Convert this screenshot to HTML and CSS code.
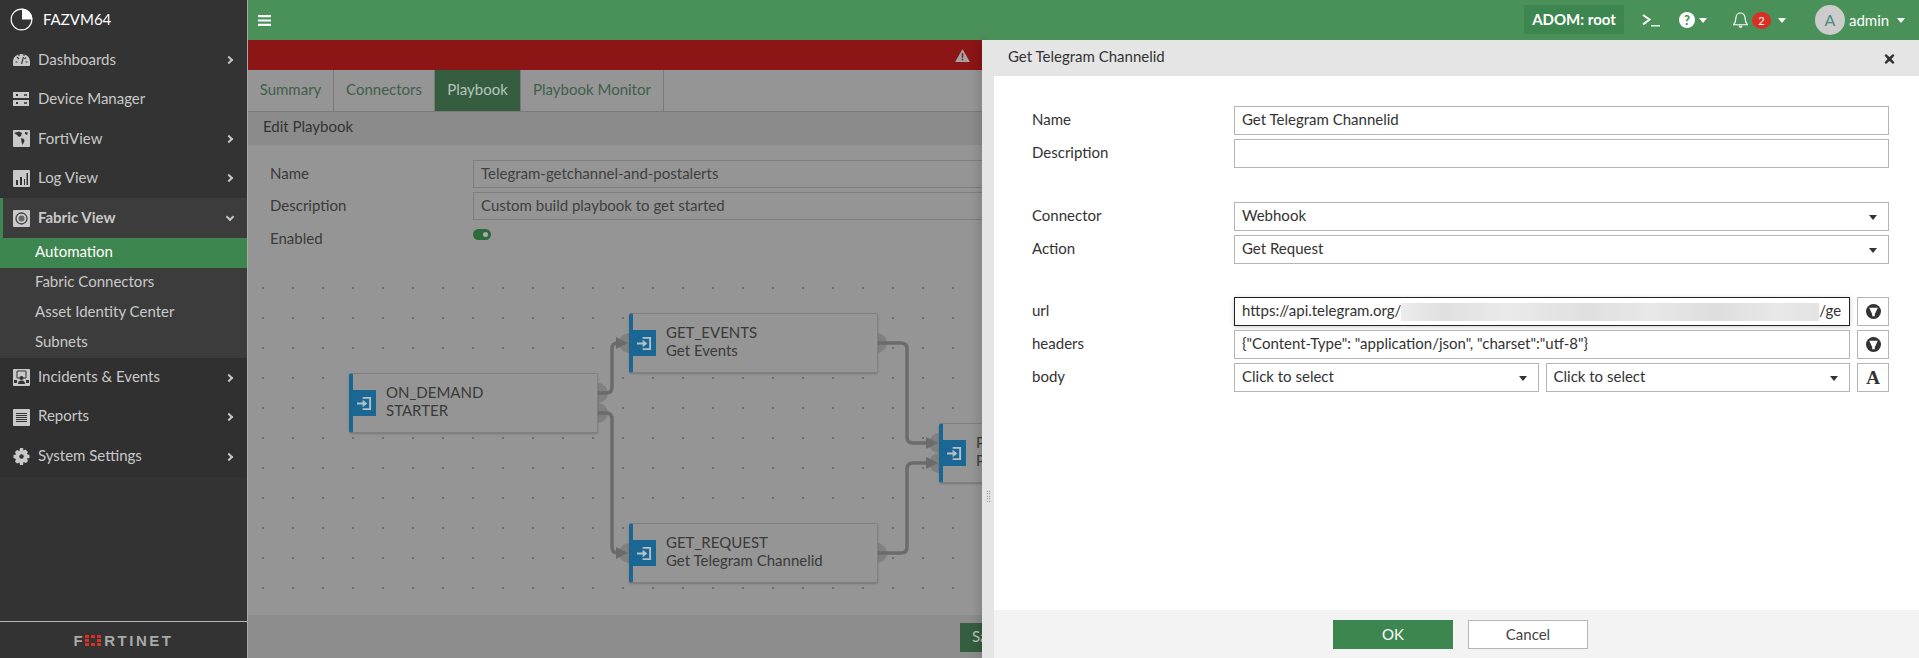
FILE: index.html
```html
<!DOCTYPE html>
<html lang="en">
<head>
<meta charset="utf-8">
<title>Get Telegram Channelid</title>
<link rel="stylesheet" href="styles.css">
</head>
<body>
<div class="app">
  <aside class="sidebar">
    <div class="brand">
      <svg class="pie" viewBox="0 0 24 24"><circle cx="12" cy="12" r="10.800" fill="none" stroke="#fff" stroke-width="1.200"/><path d="M12.500 0.500A11.500 11.500 0 0 1 23.500 12H12.500Z" fill="#fff"/></svg>
      <span>FAZVM64</span>
    </div>
    <nav class="nav">
      <a class="item">
        <svg class="ico" viewBox="0 0 17 17"><path d="M0 14V10A8.500 7 0 0 1 17 10V14A1 1 0 0 1 16 15H1A1 1 0 0 1 0 14Z" fill="#c9c9c9"/><path d="M8.500 13L10.500 6M4 6L6 8M13 6.500L11.500 8M2.500 11H4.500M12.500 11H14.500M6 5V3M11 5V3" stroke="#333" stroke-width="1.100"/></svg>
        <span class="lbl">Dashboards</span><span class="chev"></span>
      </a>
      <a class="item">
        <svg class="ico" viewBox="0 0 17 17"><path d="M0 1H16V7H0ZM0 9H16V15H0Z" fill="#c9c9c9"/><path d="M3 3H5V5H3ZM3 11H5V13H3Z" fill="#333"/><path d="M11 3H14V5H11ZM11 11H14V13H11Z" fill="#555"/></svg>
        <span class="lbl">Device Manager</span>
      </a>
      <a class="item">
        <svg class="ico" viewBox="0 0 17 17"><rect width="17" height="17" rx="1" fill="#c9c9c9"/><path d="M1 3L6 1.500L9 3L8 6L6 7L4 5ZM8 8L11 9L11.500 11L9.500 15L8.500 12ZM12 2L15 2.500L14 5L12 4Z" fill="#333"/></svg>
        <span class="lbl">FortiView</span><span class="chev"></span>
      </a>
      <a class="item">
        <svg class="ico" viewBox="0 0 17 17"><rect width="17" height="17" rx="1" fill="#c9c9c9"/><path d="M3 10H5V15H3ZM7 7H9V15H7ZM11 9H12V15H11ZM13.500 3H15V15H13.500Z" fill="#333"/></svg>
        <span class="lbl">Log View</span><span class="chev"></span>
      </a>
      <div class="group">
        <a class="item open">
          <svg class="ico" viewBox="0 0 17 17"><rect width="17" height="17" rx="1" fill="#c9c9c9"/><circle cx="8.500" cy="8.500" r="5.500" fill="none" stroke="#444" stroke-width="1.300"/><circle cx="8.500" cy="8.500" r="3" fill="#666"/></svg>
          <span class="lbl">Fabric View</span><span class="chev down"></span>
        </a>
        <a class="sub active">Automation</a>
        <a class="sub">Fabric Connectors</a>
        <a class="sub">Asset Identity Center</a>
        <a class="sub">Subnets</a>
      </div>
      <a class="item low">
        <svg class="ico" viewBox="0 0 17 17"><rect width="17" height="17" rx="1" fill="#c9c9c9"/><path d="M4 2H13V9H4Z" fill="none" stroke="#333"/><circle cx="8.500" cy="9" r="2" fill="#333"/><path d="M5 15A3.500 3.500 0 0 1 12 15ZM1 11H4V14H1ZM13 11H16V14H13Z" fill="#333"/></svg>
        <span class="lbl">Incidents &amp; Events</span><span class="chev"></span>
      </a>
      <a class="item low">
        <svg class="ico" viewBox="0 0 17 17"><rect width="17" height="17" rx="1" fill="#c9c9c9"/><path d="M3 4.500H14M3 6.500H14M3 8.500H14M3 10.500H14M3 12.500H14" stroke="#333"/></svg>
        <span class="lbl">Reports</span><span class="chev"></span>
      </a>
      <a class="item low">
        <svg class="ico" viewBox="0 0 17 17"><path d="M7 0H10L10.500 2.500L12.500 1.500L15 4L13.800 6L16.500 7V10L14 10.500L15 13L13 15L10.500 14L10 17H7L6.500 14.500L4 15.500L2 13.500L3 11L0.500 10V7L3 6.500L2 4L4 2L6.500 3Z" fill="#c9c9c9"/><circle cx="8.500" cy="8.500" r="2.200" fill="#333"/></svg>
        <span class="lbl">System Settings</span><span class="chev"></span>
      </a>
    </nav>
    <div class="logo">
      <span>F</span><svg class="logo-o" viewBox="0 0 16 11"><path d="M0 0H4V3H0ZM6 0H10V3H6ZM12 0H16V3H12ZM0 4H4V7H0ZM12 4H16V7H12ZM0 8H4V11H0ZM6 8H10V11H6ZM12 8H16V11H12Z" fill="#d93025"/></svg><span>RTINET</span>
    </div>
  </aside>

  <div class="content">
    <header class="topbar">
      <svg class="burger" viewBox="0 0 13 11"><path d="M0 0H13V2.200H0ZM0 4.400H13V6.600H0ZM0 8.800H13V11H0Z" fill="#fff"/></svg>
      <div class="top-right">
        <span class="adom">ADOM: root</span>
        <svg class="cli" viewBox="0 0 18 13"><path d="M1 1L7.500 5.500L1 10.500" fill="none" stroke="#fff" stroke-width="2"/><path d="M9 11.800H18" stroke="#fff" stroke-width="1.300"/></svg>
        <span class="help">?</span><span class="caret help-caret"></span>
        <svg class="bell" viewBox="0 0 16 18"><path d="M8 1.500A4.800 4.800 0 0 1 12.800 6.300C12.800 10.500 13.500 12 15.300 14H0.700C2.500 12 3.200 10.500 3.200 6.300A4.800 4.800 0 0 1 8 1.500Z" fill="none" stroke="#fff" stroke-width="1.200"/><path d="M6 15.200A2 2 0 0 0 10 15.200Z" fill="#fff"/></svg>
        <span class="badge">2</span><span class="caret bell-caret"></span>
        <span class="avatar">A</span>
        <span class="user">admin</span><span class="caret user-caret"></span>
      </div>
    </header>
    <div class="alert">
      <svg class="warn" viewBox="0 0 16 14"><path d="M8 0L16 14H0Z" fill="#a3a3a3"/><path d="M7.200 4.500H8.800V9.500H7.200ZM7.200 10.500H8.800V12H7.200Z" fill="#8c1515"/></svg>
    </div>
    <div class="tabs">
      <a class="tab t-summary">Summary</a>
      <a class="tab t-conn">Connectors</a>
      <a class="tab t-play on">Playbook</a>
      <a class="tab t-mon">Playbook Monitor</a>
    </div>
    <div class="page-title">Edit Playbook</div>
    <div class="pb-form">
      <div class="pb-row"><label>Name</label><div class="pb-input">Telegram-getchannel-and-postalerts</div></div>
      <div class="pb-row"><label>Description</label><div class="pb-input">Custom build playbook to get started</div></div>
      <div class="pb-row toggle-row"><label>Enabled</label><span class="toggle"></span></div>
    </div>
    <div class="canvas">
      <svg class="wires" width="735" height="329" viewBox="0 0 735 329">
        <g fill="#808080">
          <circle cx="350" cy="107" r="10"/><circle cx="350" cy="127" r="10"/>
          <circle cx="381" cy="57" r="10"/><circle cx="629" cy="57" r="10"/>
          <circle cx="381" cy="267" r="10"/><circle cx="629" cy="267" r="10"/>
          <circle cx="691" cy="157" r="10"/><circle cx="691" cy="177" r="10"/>
        </g>
        <g fill="none" stroke="#6b6b6b" stroke-width="3.500">
          <path d="M350 107H358Q364 107 364 101V63Q364 57 370 57H374"/>
          <path d="M350 127H358Q364 127 364 133V261Q364 267 370 267H374"/>
          <path d="M629 57H653Q659 57 659 63V151Q659 157 665 157H682"/>
          <path d="M629 267H653Q659 267 659 261V183Q659 177 665 177H682"/>
        </g>
        <g fill="#6b6b6b">
          <path d="M368 51L380 57L368 63Z"/><path d="M368 261L380 267L368 273Z"/>
          <path d="M678 151L690 157L678 163Z"/><path d="M678 171L690 177L678 183Z"/>
        </g>
      </svg>
      <div class="node n-start"><span class="node-ico"><svg viewBox="0 0 16 16"><path d="M6 1H15V15H6V13H13V3H6Z M0 7H6V4L11 8L6 12V9H0Z" fill="#b5bfc5"/></svg></span><div class="node-text">ON_DEMAND<br>STARTER</div></div>
      <div class="node n-events"><span class="node-ico"><svg viewBox="0 0 16 16"><path d="M6 1H15V15H6V13H13V3H6Z M0 7H6V4L11 8L6 12V9H0Z" fill="#b5bfc5"/></svg></span><div class="node-text">GET_EVENTS<br>Get Events</div></div>
      <div class="node n-request"><span class="node-ico"><svg viewBox="0 0 16 16"><path d="M6 1H15V15H6V13H13V3H6Z M0 7H6V4L11 8L6 12V9H0Z" fill="#b5bfc5"/></svg></span><div class="node-text">GET_REQUEST<br>Get Telegram Channelid</div></div>
      <div class="node n-post"><span class="node-ico"><svg viewBox="0 0 16 16"><path d="M6 1H15V15H6V13H13V3H6Z M0 7H6V4L11 8L6 12V9H0Z" fill="#b5bfc5"/></svg></span><div class="node-text">POST<br>Post</div></div>
    </div>
    <div class="save-bar"><button class="save">Save</button></div>
  </div>

  <section class="panel">
    <div class="grip"><i></i></div>
    <div class="panel-main">
      <div class="panel-head"><span>Get Telegram Channelid</span><svg class="close" viewBox="0 0 10 10"><path d="M1.500 0L5 3L8.500 0L10 1.500L7 5L10 8.500L8.500 10L5 7L1.500 10L0 8.500L3 5L0 1.500Z" fill="#333"/></svg></div>
      <div class="panel-body">
        <div class="f-row"><label>Name</label><div class="field">Get Telegram Channelid</div></div>
        <div class="f-row"><label>Description</label><div class="field"></div></div>
        <div class="f-row gap-top"><label>Connector</label><div class="field select">Webhook<span class="arrow"></span></div></div>
        <div class="f-row"><label>Action</label><div class="field select">Get Request<span class="arrow"></span></div></div>
        <div class="f-row gap-top2"><label>url</label>
          <div class="field focus">https://api.telegram.org/<span class="blur"></span>/ge</div>
          <button class="sq"><svg viewBox="0 0 14 14"><circle cx="7" cy="7" r="7" fill="#333"/><path d="M3 3.500H11L8.200 9.500V11.500H5.800V9.500Z" fill="#fff"/></svg></button>
        </div>
        <div class="f-row"><label>headers</label>
          <div class="field">{"Content-Type": "application/json", "charset":"utf-8"}</div>
          <button class="sq"><svg viewBox="0 0 14 14"><circle cx="7" cy="7" r="7" fill="#333"/><path d="M3 3.500H11L8.200 9.500V11.500H5.800V9.500Z" fill="#fff"/></svg></button>
        </div>
        <div class="f-row"><label>body</label>
          <div class="two">
            <div class="field select">Click to select<span class="arrow"></span></div>
            <div class="field select">Click to select<span class="arrow"></span></div>
          </div>
          <button class="sq serif">A</button>
        </div>
      </div>
      <div class="panel-foot"><button class="btn ok">OK</button><button class="btn cancel">Cancel</button></div>
    </div>
  </section>
</div>
</body>
</html>
```

FILE: styles.css
```css
* { box-sizing: border-box; }
html, body { margin: 0; height: 100%; overflow: hidden; }
body { font: 15px/17px Lato, "Open Sans", sans-serif; color: #333; }
.app { position: relative; display: flex; width: 1919px; height: 658px; overflow: hidden; }

/* sidebar */
.sidebar { flex: 0 0 248px; display: flex; flex-direction: column; background: #333; border-right: 1px solid #a9a9a9; color: #c9c9c9; }
.brand { display: flex; align-items: center; height: 40px; padding: 0 0 2px 10px; color: #fff; font-size: 15px; }
.pie { width: 23px; height: 23px; margin-right: 10px; }
.nav { flex: 1; background: #333; }
.item { display: flex; align-items: center; height: 39.500px; padding-left: 13px; }
.item .lbl { flex: 1; margin-left: 8px; padding-bottom: 1px; }
.ico { width: 17px; height: 17px; flex: none; }
.chev { width: 6px; height: 6px; margin-right: 15px; border-top: 2px solid #c4c4c4; border-right: 2px solid #c4c4c4; transform: rotate(45deg); }
.chev.down { transform: rotate(135deg); margin-top: -3px; margin-right: 14px; }
.group { background: #3c3c3c; height: 160px; }
.open { height: 40px; padding-left: 13px; border-left: 3px solid #3e8650; font-weight: 700; }
.open .ico { margin-left: -3px; }
.sub { display: flex; align-items: center; height: 30px; padding: 0 0 4px 35px; }
.sub.active { background: #3e8650; color: #fff; }
.low { background: #303030; }
.low .lbl { padding-bottom: 3px; }
.logo { display: flex; align-items: center; justify-content: center; flex: 0 0 37px; border-top: 1px solid #b5b5b5; font: 700 15px/1 "Liberation Sans", sans-serif; letter-spacing: 2.500px; color: #a9a9a9; }
.logo-o { width: 16px; height: 11px; margin-right: 3px; }

/* main */
.content { flex: 1; display: flex; flex-direction: column; min-width: 0; background: #959595; }
.topbar { display: flex; align-items: center; justify-content: space-between; flex: 0 0 40px; background: #4a9159; color: #fff; padding-left: 10px; }
.burger { width: 13px; height: 11px; }
.top-right { display: flex; align-items: center; height: 40px; padding-right: 14px; }
.adom { display: flex; align-items: center; justify-content: center; width: 100px; height: 29px; background: #3e8650; font-weight: 700; margin: -1px 18px 0 0; }
.cli { width: 18px; height: 13px; margin-right: 19px; }
.help { width: 16px; height: 16px; border-radius: 50%; background: #fff; color: #4a9159; font-weight: 900; font-size: 13px; line-height: 16px; text-align: center; margin-right: 4px; }
.caret { width: 0; height: 0; border: 4px solid transparent; border-top: 5px solid #fff; border-bottom: 0; }
.help-caret { margin-right: 26px; }
.bell { width: 15px; height: 18px; margin-right: 4px; }
.badge { width: 19px; height: 17px; border-radius: 50%; background: #d93025; color: #fff; font-size: 11px; line-height: 17px; text-align: center; margin-right: 7px; }
.bell-caret { margin-right: 29px; }
.avatar { width: 30px; height: 30px; border-radius: 50%; background: #ccc; color: #4a8a80; text-align: center; line-height: 30px; font-size: 16px; margin-right: 4px; }
.user { width: 40px; margin-right: 8px; }

.alert { flex: 0 0 30px; background: #8c1515; display: flex; align-items: center; justify-content: flex-end; padding-right: 949px; }
.warn { width: 15px; height: 13px; }
.tabs { display: flex; flex: 0 0 42px; background: #959595; border-bottom: 1px solid #7a7a7a; }
.tab { display: flex; align-items: center; justify-content: center; border-right: 1px solid #7a7a7a; padding-bottom: 2px; color: #3f5f4a; }
.t-summary { width: 86px; }
.t-conn { width: 101px; }
.t-play { width: 86px; }
.t-mon { width: 143px; }
.tab.on { background: #355d3f; color: #b8c4bb; }
.page-title { display: flex; align-items: center; flex: 0 0 33px; padding: 0 0 4px 15px; background: #8b8b8b; color: #333; }
.pb-form { flex: 0 0 141px; padding: 15px 0 0 22px; }
.pb-row { display: flex; align-items: center; height: 28px; margin-bottom: 4px; }
.pb-row label { width: 203px; color: #3a3a3a; padding-bottom: 2px; }
.pb-input { display: flex; align-items: center; width: 600px; height: 28px; padding: 0 0 2px 7px; border: 1px solid #7e7e7e; color: #3f3f3f; }
.toggle-row { align-items: flex-start; height: 24px; }
.toggle-row label { padding: 6px 0 0; }
.toggle { position: relative; width: 18px; height: 11px; margin-top: 5px; border-radius: 6px; background: #2d6b3c; }
.toggle::after { content: ""; position: absolute; right: 3px; top: 3px; width: 5px; height: 5px; border-radius: 50%; background: #aaa; }

.canvas { position: relative; flex: 1; background-color: #959595; background-image: radial-gradient(circle at 15px 15px, #6e6e6e 1px, transparent 1.300px); background-size: 30px 30px; background-position: 0 -13px; }
.wires { position: absolute; left: 0; top: 0; }
.node { position: absolute; display: flex; width: 249px; height: 60px; background: #959595; border: 1px solid #808080; border-left: 4px solid #1a6794; border-radius: 3px 2px 2px 3px; box-shadow: 0 1px 2px rgba(0,0,0,.2); }
.node-ico { display: flex; align-items: center; justify-content: center; flex: none; width: 23px; height: 26px; margin-top: 16px; background: #1a6794; }
.node-ico svg { width: 15px; height: 15px; }
.node-text { margin: 9px 0 0 10px; line-height: 18px; color: #3a3a3a; }
.n-start { left: 101px; top: 87px; }
.n-events { left: 381px; top: 27px; }
.n-request { left: 381px; top: 237px; }
.n-post { left: 691px; top: 137px; }
.save-bar { flex: 0 0 43px; padding: 8px 0 0 712px; background: #8c8c8c; }
.save { display: block; width: 60px; height: 29px; border: 0; padding: 0 0 2px 12px; text-align: left; background: #355d3f; color: #b8c4bb; font: inherit; }

/* side panel */
.panel { position: absolute; left: 982px; right: 0; top: 40px; bottom: 0; display: flex; }
.grip { flex: 0 0 12px; display: flex; justify-content: center; padding-top: 450px; background: #e5e5e5; box-shadow: -4px 0 8px rgba(0,0,0,.12); }
.grip i { width: 5px; height: 12px; background-image: radial-gradient(circle, #555 .7px, transparent .8px); background-size: 2.500px 2.500px; }
.panel-main { flex: 1; display: flex; flex-direction: column; min-width: 0; background: #fff; }
.panel-head { display: flex; align-items: center; justify-content: space-between; flex: 0 0 36px; padding: 0 24px 4px 14px; background: #e5e5e5; }
.close { width: 11px; height: 10px; margin-top: 6px; }
.panel-body { flex: 1; padding: 30px 30px 0 38px; }
.f-row { display: flex; align-items: center; gap: 7px; margin-bottom: 4px; }
.f-row label { width: 195px; flex: none; color: #333; padding-bottom: 2px; }
.gap-top { margin-top: 34px; }
.gap-top2 { margin-top: 33px; }
.field { position: relative; flex: 1; display: flex; align-items: center; min-width: 0; height: 29px; padding: 0 0 2px 7px; border: 1px solid #b5b5b5; white-space: nowrap; overflow: hidden; color: #333; }
.select .arrow { position: absolute; right: 11px; top: 12px; border: 4px solid transparent; border-top: 5px solid #333; border-bottom: 0; }
.focus { border: 1.500px solid #222; box-shadow: 0 1px 5px rgba(0,0,0,.2); }
.blur { flex: 0 0 418px; height: 18px; margin: 2px 0 0; background: linear-gradient(90deg, #ececec, #e0e0e0 10%, #eaeaea 25%, #e0e0e0 45%, #e8e8e8 60%, #dedede 75%, #e8e8e8 90%, #e4e4e4); filter: blur(.5px); }
.two { flex: 1; display: flex; gap: 7px; min-width: 0; }
.sq { flex: 0 0 32px; display: flex; align-items: center; justify-content: center; height: 29px; padding: 0; background: #fff; border: 1px solid #b5b5b5; }
.sq svg { width: 15px; height: 15px; }
.serif { font: 700 19px/1 "Liberation Serif", serif; color: #333; }
.panel-foot { display: flex; justify-content: center; gap: 15px; flex: 0 0 48px; padding: 10px 0 0 8px; background: #f3f3f3; }
.btn { width: 120px; height: 29px; padding: 0 0 2px; font: 15px Lato, sans-serif; }
.ok { background: #3e8650; border: 0; color: #fff; }
.cancel { background: #fff; border: 1px solid #b5b5b5; color: #444; }
```
